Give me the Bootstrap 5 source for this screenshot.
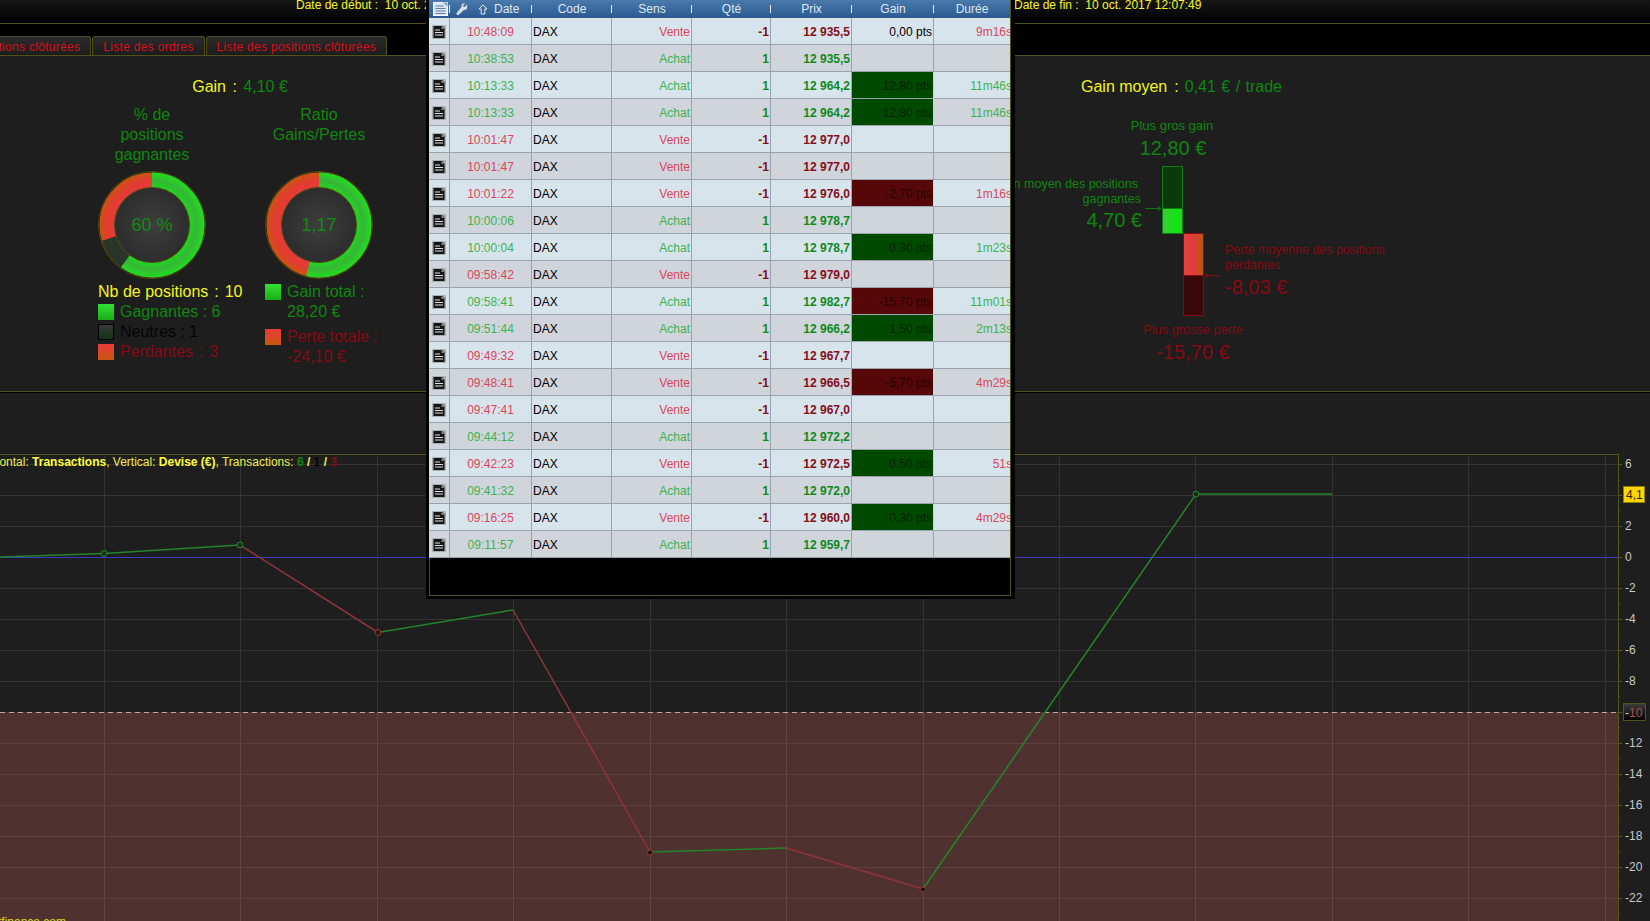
<!DOCTYPE html>
<html lang="fr">
<head>
<meta charset="utf-8">
<title>Rapport de trading</title>
<link href="https://cdn.jsdelivr.net/npm/bootstrap@5.3.0/dist/css/bootstrap.min.css" rel="stylesheet">
<style>
html,body{height:921px;overflow:hidden;background:#1e1e1e;}
body{position:relative;font-family:"Liberation Sans",Arial,sans-serif;font-size:12px;color:#f5f51e;}
.c-y{color:#f5f51e}.c-g{color:#0f860f}.c-r{color:#860a12}.c-k{color:#050505}
.topstrip{height:24px;background:linear-gradient(#161616,#000);border-bottom:1px solid #50521e;padding-left:296px;line-height:10px;color:#f6f62a;overflow:hidden;}
.topstrip .date-a{width:718px;}
.tabband{height:32px;background:#000;border-bottom:1px solid #50521e;}
.tabrow{width:387px;height:31px;overflow:hidden;gap:1px;}
.tabitem{flex:none;height:19px;margin-top:12px;padding:0 10px;line-height:21px;color:#d80f1c;letter-spacing:.3px;background:linear-gradient(#2b2b2b,#1c1c1c);border:1px solid #50521e;border-bottom:0;border-radius:3px 3px 0 0;white-space:nowrap;}
.statpanel{height:336px;background:#1e1e1e;border-bottom:1px solid #50521e;box-shadow:0 1px 0 #000;}
.leftstats{width:426px;padding:21px 0 0 98px;font-size:16px;line-height:20px;}
.gaintitle{padding-right:44px;text-align:center;}
.sep{margin:0 2px;}
.sep-s{margin:0 1.5px;}
.donutcol{width:167px;}
.donutcol.second{width:161px;}
.donuthead{width:108px;height:66px;text-align:center;white-space:nowrap;}
.donut{display:block;width:108px;height:108px;}
.legendblock{margin-top:3px;white-space:nowrap;}
.sq{flex:none;display:block;width:16px;height:16px;margin:2px 2px 0 0;}
.sq-g{background:linear-gradient(#32e232,#17ad17);}
.sq-n{background:linear-gradient(#3a3a3a,#123312);border:1px solid #000;}
.sq-r{background:linear-gradient(#ea3a3a,#c9560e);}
.sq-gap{margin-top:5px;}
.rightstats{width:635px;height:335px;display:block;}
.chartbox{display:block;margin-top:1px;width:1650px;height:528px;}
.tradewin{position:absolute;top:0;left:426px;width:589px;height:599px;background:#000;padding:0 4px 3px 3px;z-index:5;}
.tradein{width:582px;height:596px;border-right:1px solid #50521e;}
.tradefoot{border:1px solid #50521e;border-top:0;border-right:0;}
.trades{table-layout:fixed;width:581px;border-collapse:separate;border-spacing:0;font-size:12px;color:#000;}
.trades th{position:relative;height:18px;padding:0;background:linear-gradient(#4a79ab,#2a5a90);color:#dfe8f0;font-weight:400;text-align:center;line-height:16px;overflow:hidden;}
.trades th::after{content:"";position:absolute;right:0;top:5px;width:1px;height:8px;background:#e6edf3;}
.trades th:last-child::after{display:none;}
.datehead{padding-left:6px;gap:6px;}
.trades td{height:27px;padding:2px 1px 0;line-height:24px;background:#d7e4ec;border-right:1px solid #98a4ad;border-bottom:1px solid #98a4ad;overflow:hidden;white-space:nowrap;}
.trades tr:nth-child(even) td{background:#d0d4db;}
.trades td.ic{padding:2px 0 0;text-align:center;vertical-align:middle;line-height:0;}
.trades td.ic svg{display:inline-block;}
.trades td.tm{text-align:center;}
.trades td.ra{text-align:right;}
.trades td:last-child{border-right:0;}
.v .tm,.v .sn,td.du.dr{color:#d8475c;}
.a .tm,.a .sn,td.du.dg{color:#3db34f;}
td.qt,td.px{font-weight:700;}
.v .qt,.v .px{color:#860d1a;}
.a .qt,.a .px{color:#0f8a1a;}
.trades tr td.gp,.trades tr:nth-child(even) td.gp{background:#004a00;color:#032203;border-right-color:#c8d2d8;}
.trades tr td.gm,.trades tr:nth-child(even) td.gm{background:#560808;color:#250303;border-right-color:#c8d2d8;}
.du span{display:inline-block;margin-right:-3px;}
</style>
</head>
<body>
<svg width="0" height="0" class="position-absolute">
<defs>
<g id="doc"><rect x="0" y="0" width="14" height="14" rx="1" fill="#a9aeb3"/><path d="M1.500 1h8.500l2.500 2.500V13h-11z" fill="#161616"/><path d="M9.500 1v3h3" fill="#8a8a8a"/><path d="M3 5h5M3 7.500h8M3 10h8" stroke="#e2e2e2" stroke-width="1"/></g>
<radialGradient id="rg" gradientUnits="userSpaceOnUse" cx="54" cy="54" r="53"><stop offset=".7" stop-color="#1ed81e"/><stop offset=".84" stop-color="#36b636"/><stop offset="1" stop-color="#1fe01f"/></radialGradient>
<radialGradient id="rr" gradientUnits="userSpaceOnUse" cx="54" cy="54" r="53"><stop offset=".7" stop-color="#e63a3a"/><stop offset=".85" stop-color="#e23c30"/><stop offset="1" stop-color="#c9560f"/></radialGradient>
<radialGradient id="rc" cx=".5" cy=".5" r=".55"><stop offset="0" stop-color="#3e3e3e"/><stop offset="1" stop-color="#2b2b2b"/></radialGradient>
<linearGradient id="bg" x1="0" x2="1" y1="0" y2="0"><stop offset="0" stop-color="#3fc83f"/><stop offset=".5" stop-color="#16e016"/><stop offset="1" stop-color="#16e016"/></linearGradient>
<linearGradient id="br" x1="0" x2="1" y1="0" y2="0"><stop offset="0" stop-color="#e8403c"/><stop offset=".5" stop-color="#e03c3c"/><stop offset="1" stop-color="#b8560e"/></linearGradient>
<linearGradient id="bd" x1="0" x2="0" y1="0" y2="1"><stop offset="0" stop-color="#3e3e3e"/><stop offset="1" stop-color="#000"/></linearGradient>
</defs>
</svg>

<div class="topstrip d-flex">
  <span class="date-a">Date de début :&nbsp; 10 oct. 2017 09:11:57</span>
  <span>Date de fin :&nbsp; 10 oct. 2017 12:07:49</span>
</div>
<div class="tabband">
  <div class="tabrow d-flex justify-content-end">
    <div class="tabitem">Liste des positions clôturées</div>
    <div class="tabitem">Liste des ordres</div>
    <div class="tabitem">Liste des positions clôturées</div>
  </div>
</div>

<div class="statpanel d-flex justify-content-between">
  <div class="leftstats">
    <div class="gaintitle c-y">Gain<span class="sep">&nbsp;:&nbsp;</span><span class="c-g">4,10 €</span></div>
    <div class="d-flex mt-2">
      <div class="donutcol">
        <div class="donuthead c-g">% de<br>positions<br>gagnantes</div>
        <svg class="donut" viewBox="0 0 108 108">
          <circle cx="54" cy="54" r="53.5" fill="#101010" stroke="#4f4f10"/>
          <g fill="none" stroke-width="15" transform="rotate(-90 54 54)">
            <circle cx="54" cy="54" r="45" stroke="url(#rr)"/>
            <circle cx="54" cy="54" r="45" stroke="#2a352a" stroke-dasharray="197.9 282.7"/>
            <circle cx="54" cy="54" r="45" stroke="url(#rg)" stroke-dasharray="169.6 282.7"/>
          </g>
          <circle cx="54" cy="54" r="37.5" fill="url(#rc)" stroke="#4f4f10"/>
          <text x="54" y="60" text-anchor="middle" font-size="18" fill="#128a14">60 %</text>
        </svg>
        <div class="legendblock">
          <div class="c-y">Nb de positions<span class="sep-s">&nbsp;:&nbsp;</span>10</div>
          <div class="d-flex gap-1 c-g"><i class="sq sq-g"></i>Gagnantes : 6</div>
          <div class="d-flex gap-1 c-k"><i class="sq sq-n"></i>Neutres : 1</div>
          <div class="d-flex gap-1 c-r"><i class="sq sq-r"></i><span>Perdantes<span class="sep-s">&nbsp;:&nbsp;</span>3</span></div>
        </div>
      </div>
      <div class="donutcol second">
        <div class="donuthead c-g">Ratio<br>Gains/Pertes</div>
        <svg class="donut" viewBox="0 0 108 108">
          <circle cx="54" cy="54" r="53.5" fill="#101010" stroke="#4f4f10"/>
          <g fill="none" stroke-width="15" transform="rotate(-90 54 54)">
            <circle cx="54" cy="54" r="45" stroke="url(#rr)"/>
            <circle cx="54" cy="54" r="45" stroke="url(#rg)" stroke-dasharray="152.4 282.7"/>
          </g>
          <circle cx="54" cy="54" r="37.5" fill="url(#rc)" stroke="#4f4f10"/>
          <text x="54" y="60" text-anchor="middle" font-size="18" fill="#128a14">1,17</text>
        </svg>
        <div class="legendblock">
          <div class="d-flex gap-1 c-g"><i class="sq sq-g"></i><span>Gain total :<br>28,20 €</span></div>
          <div class="d-flex gap-1 c-r sq-gap"><i class="sq sq-r"></i><span>Perte totale :<br>-24,10 €</span></div>
        </div>
      </div>
    </div>
  </div>

  <svg class="rightstats" viewBox="1015 56 635 335" font-family="Liberation Sans, Arial, sans-serif">
    <text x="1081" y="92" font-size="16" fill="#f5f51e">Gain moyen<tspan dx="7">:</tspan><tspan dx="6" fill="#0f860f" word-spacing="1">0,41 € / trade</tspan></text>
    <g fill="#0f860f">
      <text x="1172" y="130" font-size="13" text-anchor="middle">Plus gros gain</text>
      <text x="1173" y="155" font-size="20" text-anchor="middle">12,80 €</text>
      <text x="1138" y="188" font-size="12.5" text-anchor="end">Gain moyen des positions</text>
      <text x="1141" y="203" font-size="12.5" text-anchor="end">gagnantes</text>
      <text x="1142" y="227" font-size="20" text-anchor="end">4,70 €</text>
    </g>
    <g fill="#860a12">
      <text x="1225" y="254" font-size="12.4">Perte moyenne des positions</text>
      <text x="1225" y="269" font-size="12.4">perdantes</text>
      <text x="1225" y="294" font-size="20">-8,03 €</text>
      <text x="1193" y="334" font-size="12.8" text-anchor="middle">Plus grosse perte</text>
      <text x="1193" y="359" font-size="20" text-anchor="middle">-15,70 €</text>
    </g>
    <rect x="1162.5" y="166.5" width="20" height="67" fill="#0a3a0a" stroke="#127a12"/>
    <rect x="1163" y="209" width="19" height="24" fill="url(#bg)"/>
    <path d="M1163 208.5h19" stroke="#127a12"/>
    <rect x="1183.5" y="233.5" width="20" height="82" fill="#3a0808" stroke="#860a12"/>
    <rect x="1184" y="234" width="19" height="41" fill="url(#br)"/>
    <path d="M1184 275.5h19" stroke="#860a12"/>
    <path d="M1145 208.5h16M1158 206.5l3 2-3 2" stroke="#127a12" fill="none"/>
    <path d="M1205 275.5h15M1208 273.5l-3 2 3 2" stroke="#860a12" fill="none"/>
  </svg>
</div>

<svg class="chartbox" viewBox="0 393 1650 528" font-family="Liberation Sans, Arial, sans-serif" font-size="12">
  <rect x="0" y="712" width="1618" height="209" fill="#4f3130"/>
  <path stroke="#343434" fill="none" d="M0 464.5H1618M0 495.5H1618M0 526.5H1618M0 588.5H1618M0 619.5H1618M0 650.5H1618M0 681.5H1618"/>
  <path stroke="#5c3f3e" fill="none" d="M0 743.5H1618M0 774.5H1618M0 805.5H1618M0 836.5H1618M0 867.5H1618M0 898.5H1618"/>
  <path stroke="#343434" fill="none" d="M104.500 455V712M240.500 455V712M377.500 455V712M513.500 455V712M650.500 455V712M786.500 455V712M923.500 455V712M1059.500 455V712M1195.500 455V712M1332.500 455V712M1468.500 455V712M1605.500 455V712"/>
  <path stroke="#604746" fill="none" d="M104.500 712V921M240.500 712V921M377.500 712V921M513.500 712V921M650.500 712V921M786.500 712V921M923.500 712V921M1059.500 712V921M1195.500 712V921M1332.500 712V921M1468.500 712V921M1605.500 712V921"/>
  <rect x="0" y="557" width="1618" height="1" fill="#3c38c8"/>
  <path stroke="#c9a8a0" stroke-dasharray="5 4" fill="none" d="M0 712.500H1618"/>
  <path stroke="#55551a" fill="none" d="M0 454.500H1618.500V921"/>
  <path stroke="#55551a" fill="none" d="M1618 464.500h4M1618 480h2M1618 495.500h4M1618 511h2M1618 526.500h4M1618 542h2M1618 557.500h4M1618 573h2M1618 588.500h4M1618 604h2M1618 619.500h4M1618 635h2M1618 650.500h4M1618 666h2M1618 681.500h4M1618 697h2M1618 712.500h4M1618 728h2M1618 743.500h4M1618 759h2M1618 774.500h4M1618 790h2M1618 805.500h4M1618 821h2M1618 836.500h4M1618 852h2M1618 867.500h4M1618 883h2M1618 898.500h4M1618 914h2"/>
  <g fill="none" stroke-width="1.5">
    <path stroke="#24842a" d="M0 557L104 553.500L240 545"/>
    <path stroke="#8f343a" d="M240 545L378 632.500"/>
    <path stroke="#24842a" d="M378 632.500L513 610"/>
    <path stroke="#8f343a" d="M513 610L650 852"/>
    <path stroke="#24842a" d="M650 852L786 848"/>
    <path stroke="#8f343a" d="M786 848L923 889"/>
    <path stroke="#24842a" d="M923 889L1196 494H1332"/>
  </g>
  <g fill="#1e2e1e" stroke="#1f8a24">
    <circle cx="104" cy="553.500" r="3"/><circle cx="240" cy="545" r="3"/><circle cx="1196" cy="494" r="3"/>
  </g>
  <g fill="#2a1a1a" stroke="#a03238">
    <circle cx="378" cy="632.500" r="3"/><circle cx="650" cy="852.500" r="2.500" fill="#111"/><circle cx="923" cy="889.500" r="2.500" fill="#111"/>
  </g>
  <text x="337" y="466" text-anchor="end" fill="#eded50">Horizontal: <tspan font-weight="700" fill="#ffff40">Transactions</tspan>, Vertical: <tspan font-weight="700" fill="#ffff40">Devise (€)</tspan>, Transactions: <tspan font-weight="700" fill="#0f860f">6</tspan><tspan font-weight="700"> / </tspan><tspan font-weight="700" fill="#050505">1</tspan><tspan font-weight="700"> / </tspan><tspan font-weight="700" fill="#860a12">3</tspan></text>
  <text x="66" y="926" text-anchor="end" fill="#d8d820">www.itfinance.com</text>
  <g fill="#c8c8c8">
    <text x="1625" y="468">6</text><text x="1625" y="530">2</text><text x="1625" y="561">0</text>
    <text x="1625" y="592">-2</text><text x="1625" y="623">-4</text><text x="1625" y="654">-6</text><text x="1625" y="685">-8</text>
    <text x="1625" y="747">-12</text><text x="1625" y="778">-14</text><text x="1625" y="809">-16</text><text x="1625" y="840">-18</text>
    <text x="1625" y="871">-20</text><text x="1625" y="902">-22</text><text x="1625" y="933">-24</text>
  </g>
  <rect x="1623.500" y="486.500" width="21" height="16" fill="#ffd400" stroke="#8f8000"/>
  <text x="1626" y="499" fill="#222">4,1</text>
  <rect x="1623.500" y="703.500" width="22" height="17" fill="url(#bd)" stroke="#55551a"/>
  <text x="1625" y="717" fill="#c8c8c8">-<tspan fill="#b04a4a">10</tspan></text>
</svg>

<div class="tradewin">
  <div class="tradein d-flex flex-column">
    <table class="trades">
      <colgroup><col style="width:21px"><col style="width:82px"><col style="width:80px"><col style="width:80px"><col style="width:79px"><col style="width:81px"><col style="width:82px"><col style="width:76px"></colgroup>
      <thead><tr>
        <th><svg width="17" height="14" viewBox="0 0 17 14" class="d-block ms-1"><rect x=".5" y=".5" width="14" height="13" fill="#dbe6f0" stroke="#f4f8fb"/><path d="M10 .5h4.500v4z" fill="#7f9fc0"/><path d="M2.500 4h8M2.500 6.500h10M2.500 9h10M2.500 11.500h10" stroke="#5f7fa8"/></svg></th>
        <th><div class="datehead d-flex align-items-center">
          <svg width="12" height="13" viewBox="0 0 12 13"><path d="M11 1.500 8.500 4 7.500 3.500 7 2.500 9 .5C7 -.3 5 1.500 5.500 4L.8 9.700C-.3 11 1.500 13 2.800 11.800L7.800 7C10 7.600 12 5.500 11 1.500Z" fill="#d8dfe6"/></svg>
          <svg class="ms-1" width="10" height="11" viewBox="0 0 10 11"><path d="M5 .8 9 5H6.800V10H3.200V5H1Z" fill="none" stroke="#e6edf3"/></svg>
          <span>Date</span></div></th>
        <th>Code</th><th>Sens</th><th>Qté</th><th>Prix</th><th>Gain</th><th>Durée</th>
      </tr></thead>
      <tbody>
<tr class="v"><td class="ic"><svg width="14" height="14"><use href="#doc"/></svg></td><td class="tm">10:48:09</td><td>DAX</td><td class="ra sn">Vente</td><td class="ra qt">-1</td><td class="ra px">12 935,5</td><td class="ra">0,00 pts</td><td class="ra du dr"><span>9m16s</span></td></tr>
<tr class="a"><td class="ic"><svg width="14" height="14"><use href="#doc"/></svg></td><td class="tm">10:38:53</td><td>DAX</td><td class="ra sn">Achat</td><td class="ra qt">1</td><td class="ra px">12 935,5</td><td></td><td></td></tr>
<tr class="a"><td class="ic"><svg width="14" height="14"><use href="#doc"/></svg></td><td class="tm">10:13:33</td><td>DAX</td><td class="ra sn">Achat</td><td class="ra qt">1</td><td class="ra px">12 964,2</td><td class="ra gp">12,80 pts</td><td class="ra du dg"><span>11m46s</span></td></tr>
<tr class="a"><td class="ic"><svg width="14" height="14"><use href="#doc"/></svg></td><td class="tm">10:13:33</td><td>DAX</td><td class="ra sn">Achat</td><td class="ra qt">1</td><td class="ra px">12 964,2</td><td class="ra gp">12,80 pts</td><td class="ra du dg"><span>11m46s</span></td></tr>
<tr class="v"><td class="ic"><svg width="14" height="14"><use href="#doc"/></svg></td><td class="tm">10:01:47</td><td>DAX</td><td class="ra sn">Vente</td><td class="ra qt">-1</td><td class="ra px">12 977,0</td><td></td><td></td></tr>
<tr class="v"><td class="ic"><svg width="14" height="14"><use href="#doc"/></svg></td><td class="tm">10:01:47</td><td>DAX</td><td class="ra sn">Vente</td><td class="ra qt">-1</td><td class="ra px">12 977,0</td><td></td><td></td></tr>
<tr class="v"><td class="ic"><svg width="14" height="14"><use href="#doc"/></svg></td><td class="tm">10:01:22</td><td>DAX</td><td class="ra sn">Vente</td><td class="ra qt">-1</td><td class="ra px">12 976,0</td><td class="ra gm">-2,70 pts</td><td class="ra du dr"><span>1m16s</span></td></tr>
<tr class="a"><td class="ic"><svg width="14" height="14"><use href="#doc"/></svg></td><td class="tm">10:00:06</td><td>DAX</td><td class="ra sn">Achat</td><td class="ra qt">1</td><td class="ra px">12 978,7</td><td></td><td></td></tr>
<tr class="a"><td class="ic"><svg width="14" height="14"><use href="#doc"/></svg></td><td class="tm">10:00:04</td><td>DAX</td><td class="ra sn">Achat</td><td class="ra qt">1</td><td class="ra px">12 978,7</td><td class="ra gp">0,30 pts</td><td class="ra du dg"><span>1m23s</span></td></tr>
<tr class="v"><td class="ic"><svg width="14" height="14"><use href="#doc"/></svg></td><td class="tm">09:58:42</td><td>DAX</td><td class="ra sn">Vente</td><td class="ra qt">-1</td><td class="ra px">12 979,0</td><td></td><td></td></tr>
<tr class="a"><td class="ic"><svg width="14" height="14"><use href="#doc"/></svg></td><td class="tm">09:58:41</td><td>DAX</td><td class="ra sn">Achat</td><td class="ra qt">1</td><td class="ra px">12 982,7</td><td class="ra gm">-15,70 pts</td><td class="ra du dg"><span>11m01s</span></td></tr>
<tr class="a"><td class="ic"><svg width="14" height="14"><use href="#doc"/></svg></td><td class="tm">09:51:44</td><td>DAX</td><td class="ra sn">Achat</td><td class="ra qt">1</td><td class="ra px">12 966,2</td><td class="ra gp">1,50 pts</td><td class="ra du dg"><span>2m13s</span></td></tr>
<tr class="v"><td class="ic"><svg width="14" height="14"><use href="#doc"/></svg></td><td class="tm">09:49:32</td><td>DAX</td><td class="ra sn">Vente</td><td class="ra qt">-1</td><td class="ra px">12 967,7</td><td></td><td></td></tr>
<tr class="v"><td class="ic"><svg width="14" height="14"><use href="#doc"/></svg></td><td class="tm">09:48:41</td><td>DAX</td><td class="ra sn">Vente</td><td class="ra qt">-1</td><td class="ra px">12 966,5</td><td class="ra gm">-5,70 pts</td><td class="ra du dr"><span>4m29s</span></td></tr>
<tr class="v"><td class="ic"><svg width="14" height="14"><use href="#doc"/></svg></td><td class="tm">09:47:41</td><td>DAX</td><td class="ra sn">Vente</td><td class="ra qt">-1</td><td class="ra px">12 967,0</td><td></td><td></td></tr>
<tr class="a"><td class="ic"><svg width="14" height="14"><use href="#doc"/></svg></td><td class="tm">09:44:12</td><td>DAX</td><td class="ra sn">Achat</td><td class="ra qt">1</td><td class="ra px">12 972,2</td><td></td><td></td></tr>
<tr class="v"><td class="ic"><svg width="14" height="14"><use href="#doc"/></svg></td><td class="tm">09:42:23</td><td>DAX</td><td class="ra sn">Vente</td><td class="ra qt">-1</td><td class="ra px">12 972,5</td><td class="ra gp">0,50 pts</td><td class="ra du dr"><span>51s</span></td></tr>
<tr class="a"><td class="ic"><svg width="14" height="14"><use href="#doc"/></svg></td><td class="tm">09:41:32</td><td>DAX</td><td class="ra sn">Achat</td><td class="ra qt">1</td><td class="ra px">12 972,0</td><td></td><td></td></tr>
<tr class="v"><td class="ic"><svg width="14" height="14"><use href="#doc"/></svg></td><td class="tm">09:16:25</td><td>DAX</td><td class="ra sn">Vente</td><td class="ra qt">-1</td><td class="ra px">12 960,0</td><td class="ra gp">0,30 pts</td><td class="ra du dr"><span>4m29s</span></td></tr>
<tr class="a"><td class="ic"><svg width="14" height="14"><use href="#doc"/></svg></td><td class="tm">09:11:57</td><td>DAX</td><td class="ra sn">Achat</td><td class="ra qt">1</td><td class="ra px">12 959,7</td><td></td><td></td></tr>
      </tbody>
    </table>
    <div class="tradefoot flex-grow-1"></div>
  </div>
</div>
<script src="https://cdn.jsdelivr.net/npm/bootstrap@5.3.0/dist/js/bootstrap.bundle.min.js"></script>
</body>
</html>
